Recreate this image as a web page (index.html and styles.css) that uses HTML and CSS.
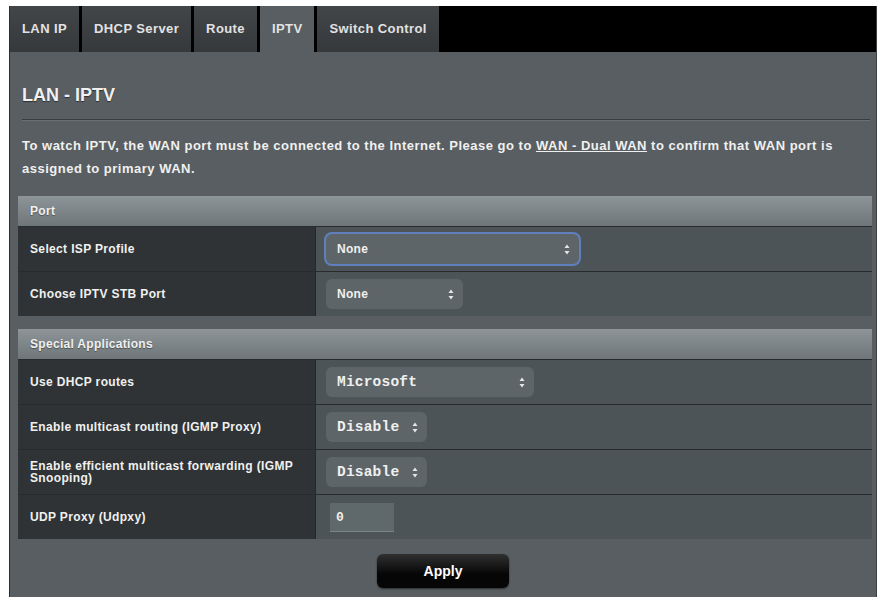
FILE: index.html
```html
<!DOCTYPE html>
<html lang="en">
<head>
    <meta charset="UTF-8">
    <title>LAN - IPTV</title>
    <link rel="stylesheet" href="styles.css">
</head>
<body>
    <div class="panel">
        <div class="tabs">
            <div class="tab">LAN IP</div>
            <div class="tab">DHCP Server</div>
            <div class="tab">Route</div>
            <div class="tab active">IPTV</div>
            <div class="tab">Switch Control</div>
        </div>

        <div class="content">
            <h1 class="title">LAN - IPTV</h1>
            <p class="desc">To watch IPTV, the WAN port must be connected to the Internet. Please go to <a href="#">WAN - Dual WAN</a> to confirm that WAN port is assigned to primary WAN.</p>

            <div class="table">
                <div class="thead">Port</div>
                <div class="row">
                    <div class="label">Select ISP Profile</div>
                    <div class="value">
                        <div class="select focus w-isp"><span>None</span>
                            <svg class="arrows" width="6" height="11" viewBox="0 0 6 11"><path d="M0.5 4 L3 0.5 L5.5 4Z M0.5 7 L3 10.5 L5.5 7Z"/></svg>
                        </div>
                    </div>
                </div>
                <div class="row">
                    <div class="label">Choose IPTV STB Port</div>
                    <div class="value">
                        <div class="select w-stb"><span>None</span>
                            <svg class="arrows" width="6" height="11" viewBox="0 0 6 11"><path d="M0.5 4 L3 0.5 L5.5 4Z M0.5 7 L3 10.5 L5.5 7Z"/></svg>
                        </div>
                    </div>
                </div>
            </div>

            <div class="table">
                <div class="thead">Special Applications</div>
                <div class="row">
                    <div class="label">Use DHCP routes</div>
                    <div class="value">
                        <div class="select mono w-ms"><span>Microsoft</span>
                            <svg class="arrows" width="6" height="11" viewBox="0 0 6 11"><path d="M0.5 4 L3 0.5 L5.5 4Z M0.5 7 L3 10.5 L5.5 7Z"/></svg>
                        </div>
                    </div>
                </div>
                <div class="row">
                    <div class="label">Enable multicast routing (IGMP Proxy)</div>
                    <div class="value">
                        <div class="select mono w-dis"><span>Disable</span>
                            <svg class="arrows" width="6" height="11" viewBox="0 0 6 11"><path d="M0.5 4 L3 0.5 L5.5 4Z M0.5 7 L3 10.5 L5.5 7Z"/></svg>
                        </div>
                    </div>
                </div>
                <div class="row">
                    <div class="label">Enable efficient multicast forwarding (IGMP Snooping)</div>
                    <div class="value">
                        <div class="select mono w-dis"><span>Disable</span>
                            <svg class="arrows" width="6" height="11" viewBox="0 0 6 11"><path d="M0.5 4 L3 0.5 L5.5 4Z M0.5 7 L3 10.5 L5.5 7Z"/></svg>
                        </div>
                    </div>
                </div>
                <div class="row">
                    <div class="label">UDP Proxy (Udpxy)</div>
                    <div class="value">
                        <div class="input">0</div>
                    </div>
                </div>
            </div>
        </div>

        <div class="actions">
            <button class="apply">Apply</button>
        </div>
    </div>
</body>
</html>
```

FILE: styles.css
```css
body {
    margin: 0;
    padding: 6px 0 0 9px;
    background: #fff;
    font-family: "Liberation Sans", Arial, sans-serif;
    color: #f0f0f0;
}
.panel {
    width: 868px;
    box-sizing: border-box;
    background: #585e61;
    border-left: 1px solid #2c2f31;
    border-right: 1px solid #3c4043;
    padding-bottom: 9px;
}

/* tabs */
.tabs {
    display: flex;
    gap: 3px;
    height: 46px;
    background: #000;
}
.tab {
    padding: 0 12px;
    line-height: 46px;
    font-size: 13px;
    font-weight: bold;
    letter-spacing: 0.4px;
    color: #e2e2e2;
    background: linear-gradient(#424649, #36393c);
}
.tab.active {
    background: #585e61;
}

.content {
    padding: 0 4px 0 8px;
}
.title {
    margin: 0 2px 0 4px;
    padding: 31px 0 12px;
    font-size: 18px;
    line-height: 24px;
    border-bottom: 1px solid #383d40;
    box-shadow: 0 1px 0 #687073;
    text-shadow: 0 1px 1px rgba(0, 0, 0, 0.5);
}
.desc {
    margin: 14px 0 16px 4px;
    max-width: 836px;
    font-size: 13px;
    letter-spacing: 0.5px;
    line-height: 23px;
    font-weight: bold;
}
.desc a {
    color: inherit;
}

/* settings tables */
.table {
    background: #4c5457;
    margin-bottom: 13px;
}
.thead {
    height: 30px;
    line-height: 30px;
    padding-left: 12px;
    background: linear-gradient(#8e9598, #6f7679);
    font-size: 12px;
    font-weight: bold;
    letter-spacing: 0.3px;
    text-shadow: 0 1px 1px rgba(0, 0, 0, 0.4);
}
.row {
    display: grid;
    grid-template-columns: 298px 1fr;
    min-height: 44px;
    border-top: 1px solid #272b2d;
}
.label {
    display: flex;
    align-items: center;
    padding: 0 12px;
    background: #2f3335;
    border-right: 1px solid #24282a;
    font-size: 12px;
    letter-spacing: 0.35px;
    line-height: 12.5px;
    font-weight: bold;
}
.value {
    display: flex;
    align-items: center;
    padding-left: 10px;
}
.select {
    display: flex;
    align-items: center;
    justify-content: space-between;
    height: 30px;
    box-sizing: border-box;
    padding: 0 9px 0 11px;
    border-radius: 6px;
    background: #5d6568;
    font-size: 12px;
    font-weight: bold;
    letter-spacing: 0.3px;
}
.select.focus {
    box-shadow: 0 0 0 2px #5f80bd;
}
.arrows {
    fill: #e6e6e6;
}
.mono {
    font-family: "Liberation Mono", monospace;
    font-size: 14.5px;
    letter-spacing: 0.2px;
}
.w-isp { width: 253px; }
.w-stb { width: 137px; }
.w-ms { width: 208px; }
.w-dis { width: 101px; }
.input {
    width: 64px;
    height: 29px;
    box-sizing: border-box;
    margin-left: 4px;
    padding-left: 6px;
    line-height: 29px;
    background: #5f686b;
    border-bottom: 1px solid #7b8487;
    font-family: "Liberation Mono", monospace;
    font-size: 13px;
    font-weight: bold;
}

.actions {
    display: flex;
    justify-content: center;
    padding-top: 2px;
}
.apply {
    width: 132px;
    height: 34px;
    border: 0;
    border-radius: 6px;
    background: linear-gradient(#303030, #060606 60%);
    box-shadow: 0 1px 2px rgba(0, 0, 0, 0.5);
    color: #fff;
    font-family: "Liberation Sans", Arial, sans-serif;
    font-size: 14px;
    font-weight: bold;
}
```
